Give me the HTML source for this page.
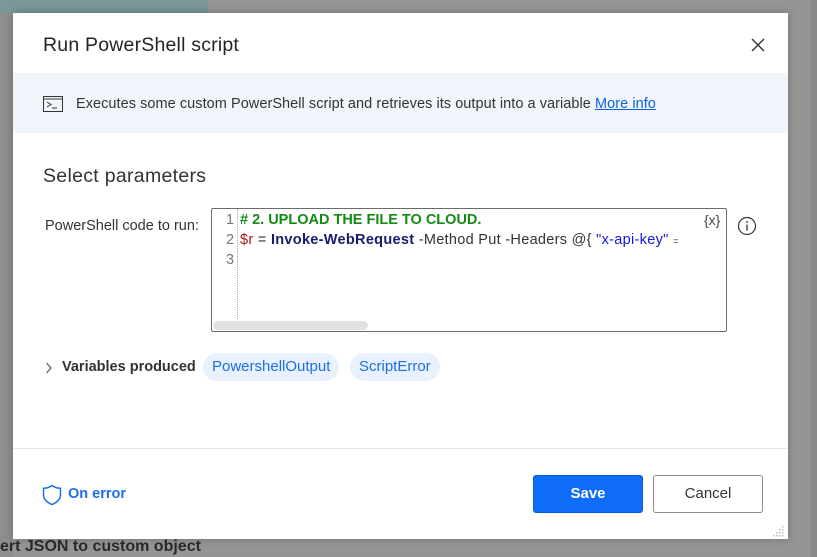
<!DOCTYPE html>
<html><head><style>
body{margin:0;width:817px;height:557px;background:#959595;position:relative;overflow:hidden;font-family:"Liberation Sans",sans-serif}
.bgl{position:absolute;left:0;top:0;width:13px;height:557px;background:#8e8e8e}
.teal{position:absolute;left:0;top:0;width:208px;height:13px;background:#7a9896}
.rstrip{position:absolute;left:811px;top:0;width:6px;height:557px;background:#8a8a8a}
.dlg{position:absolute;left:13px;top:13px;width:775px;height:526px;background:#fff;box-shadow:0 0 8px rgba(0,0,0,.25)}
.t{position:absolute;white-space:nowrap}
.band{position:absolute;left:0;top:60px;width:775px;height:60px;background:#f0f5fc}
.ed{position:absolute;left:198px;top:195px;width:514px;height:122px;border:1px solid #6b6b6b;border-radius:2px;background:#fff}
.code{font-size:14.5px;line-height:20px;letter-spacing:0.3px}
.chip{position:absolute;top:340px;height:28px;line-height:28px;border-radius:14px;background:#e8f1fd;color:#1c6fe8;font-size:15px;padding:0 9px}
.btn{position:absolute;top:462px;height:36px;width:108px;border-radius:3px;text-align:center;line-height:36px;font-size:15px}
</style></head><body>
<div class="bgl"></div><div class="teal"></div><div class="rstrip"></div>
<div class="t" style="left:0;top:538px;font-size:16px;font-weight:bold;color:#2a2a2a">ert JSON to custom object</div>
<div class="dlg">
<div class="t" style="left:30px;top:21px;font-size:19.5px;color:#242424;letter-spacing:0.2px">Run PowerShell script</div>
<svg style="position:absolute;left:738px;top:25px" width="14" height="14"><path d="M1 1L13 13M13 1L1 13" stroke="#333" stroke-width="1.4"/></svg>
<div class="band"></div>
<svg style="position:absolute;left:30px;top:83px" width="20" height="16"><rect x="0.5" y="0.5" width="19" height="15" fill="none" stroke="#333"/><line x1="1" y1="3" x2="19" y2="3" stroke="#333"/><path d="M4 6L8 8.5L4 11M9 12H14" fill="none" stroke="#333"/></svg>
<div class="t" style="left:63px;top:83px;font-size:14.5px;color:#333;letter-spacing:0.05px">Executes some custom PowerShell script and retrieves its output into a variable <span style="color:#0f62e0;text-decoration:underline">More info</span></div>
<div class="t" style="left:30px;top:152px;font-size:19.5px;color:#333;letter-spacing:0.3px">Select parameters</div>
<div class="t" style="left:32px;top:205px;font-size:14.5px;color:#333">PowerShell code to run:</div>
<div class="ed">
<div style="position:absolute;left:25px;top:0;height:110px;border-left:1px dotted #aaa"></div>
<div class="t code" style="left:14px;top:1px;color:#777;text-align:right">1<br>2<br>3</div>
<div class="t code" style="left:28px;top:1px;color:#333"><span style="color:#138a13;font-weight:bold;letter-spacing:0">#&nbsp;2.&nbsp;UPLOAD THE FILE TO CLOUD.</span><br><span style="color:#a01515">$r</span> = <b style="color:#1b1b6e">Invoke-WebRequest</b> -Method Put -Headers @{ <span style="color:#1515e0">"x-api-key"</span> <span style="font-size:9px">=</span></div>
<div class="t" style="left:492px;top:3px;font-size:14px;color:#444">{x}</div>
<div style="position:absolute;left:1px;top:112px;width:155px;height:9px;border-radius:5px;background:#e2e2e2"></div>
</div>
<svg style="position:absolute;left:724px;top:203px" width="20" height="20"><circle cx="10" cy="10" r="8.5" fill="none" stroke="#333" stroke-width="1.2"/><line x1="10" y1="8.5" x2="10" y2="14.5" stroke="#333" stroke-width="1.3"/><circle cx="10" cy="6" r="0.9" fill="#333"/></svg>
<svg style="position:absolute;left:32px;top:349px" width="8" height="12"><path d="M1.5 1L6 6L1.5 11" fill="none" stroke="#555" stroke-width="1.2"/></svg>
<div class="t" style="left:49px;top:346px;font-size:14.5px;color:#333;font-weight:bold">Variables produced</div>
<div class="chip" style="left:190px">PowershellOutput</div>
<div class="chip" style="left:337px">ScriptError</div>
<div style="position:absolute;left:0;top:435px;width:775px;height:1px;background:#e6e6e6"></div>
<svg style="position:absolute;left:29px;top:471px" width="20" height="22"><path d="M10 1.5C7 3.5 4.5 4.3 1.5 4.3V10.5C1.5 15.5 5 18.5 10 20.5C15 18.5 18.5 15.5 18.5 10.5V4.3C15.5 4.3 13 3.5 10 1.5Z" fill="none" stroke="#1c6fe8" stroke-width="1.5"/></svg>
<div class="t" style="left:55px;top:473px;font-size:14.5px;color:#1c6fe8;font-weight:bold">On error</div>
<div class="btn" style="left:520px;background:#0f6cf8;color:#fff;font-weight:bold;border:1px solid #0a5fd8">Save</div>
<div class="btn" style="left:640px;border:1px solid #8a8a8a;color:#333;background:#fff">Cancel</div>
<svg style="position:absolute;left:760px;top:512px" width="12" height="12" fill="#bbb"><rect x="9" y="1" width="1.5" height="1.5"/><rect x="6" y="4" width="1.5" height="1.5"/><rect x="9" y="4" width="1.5" height="1.5"/><rect x="3" y="7" width="1.5" height="1.5"/><rect x="6" y="7" width="1.5" height="1.5"/><rect x="9" y="7" width="1.5" height="1.5"/><rect x="0" y="10" width="1.5" height="1.5"/><rect x="3" y="10" width="1.5" height="1.5"/><rect x="6" y="10" width="1.5" height="1.5"/><rect x="9" y="10" width="1.5" height="1.5"/></svg>
</div>
</body></html>
